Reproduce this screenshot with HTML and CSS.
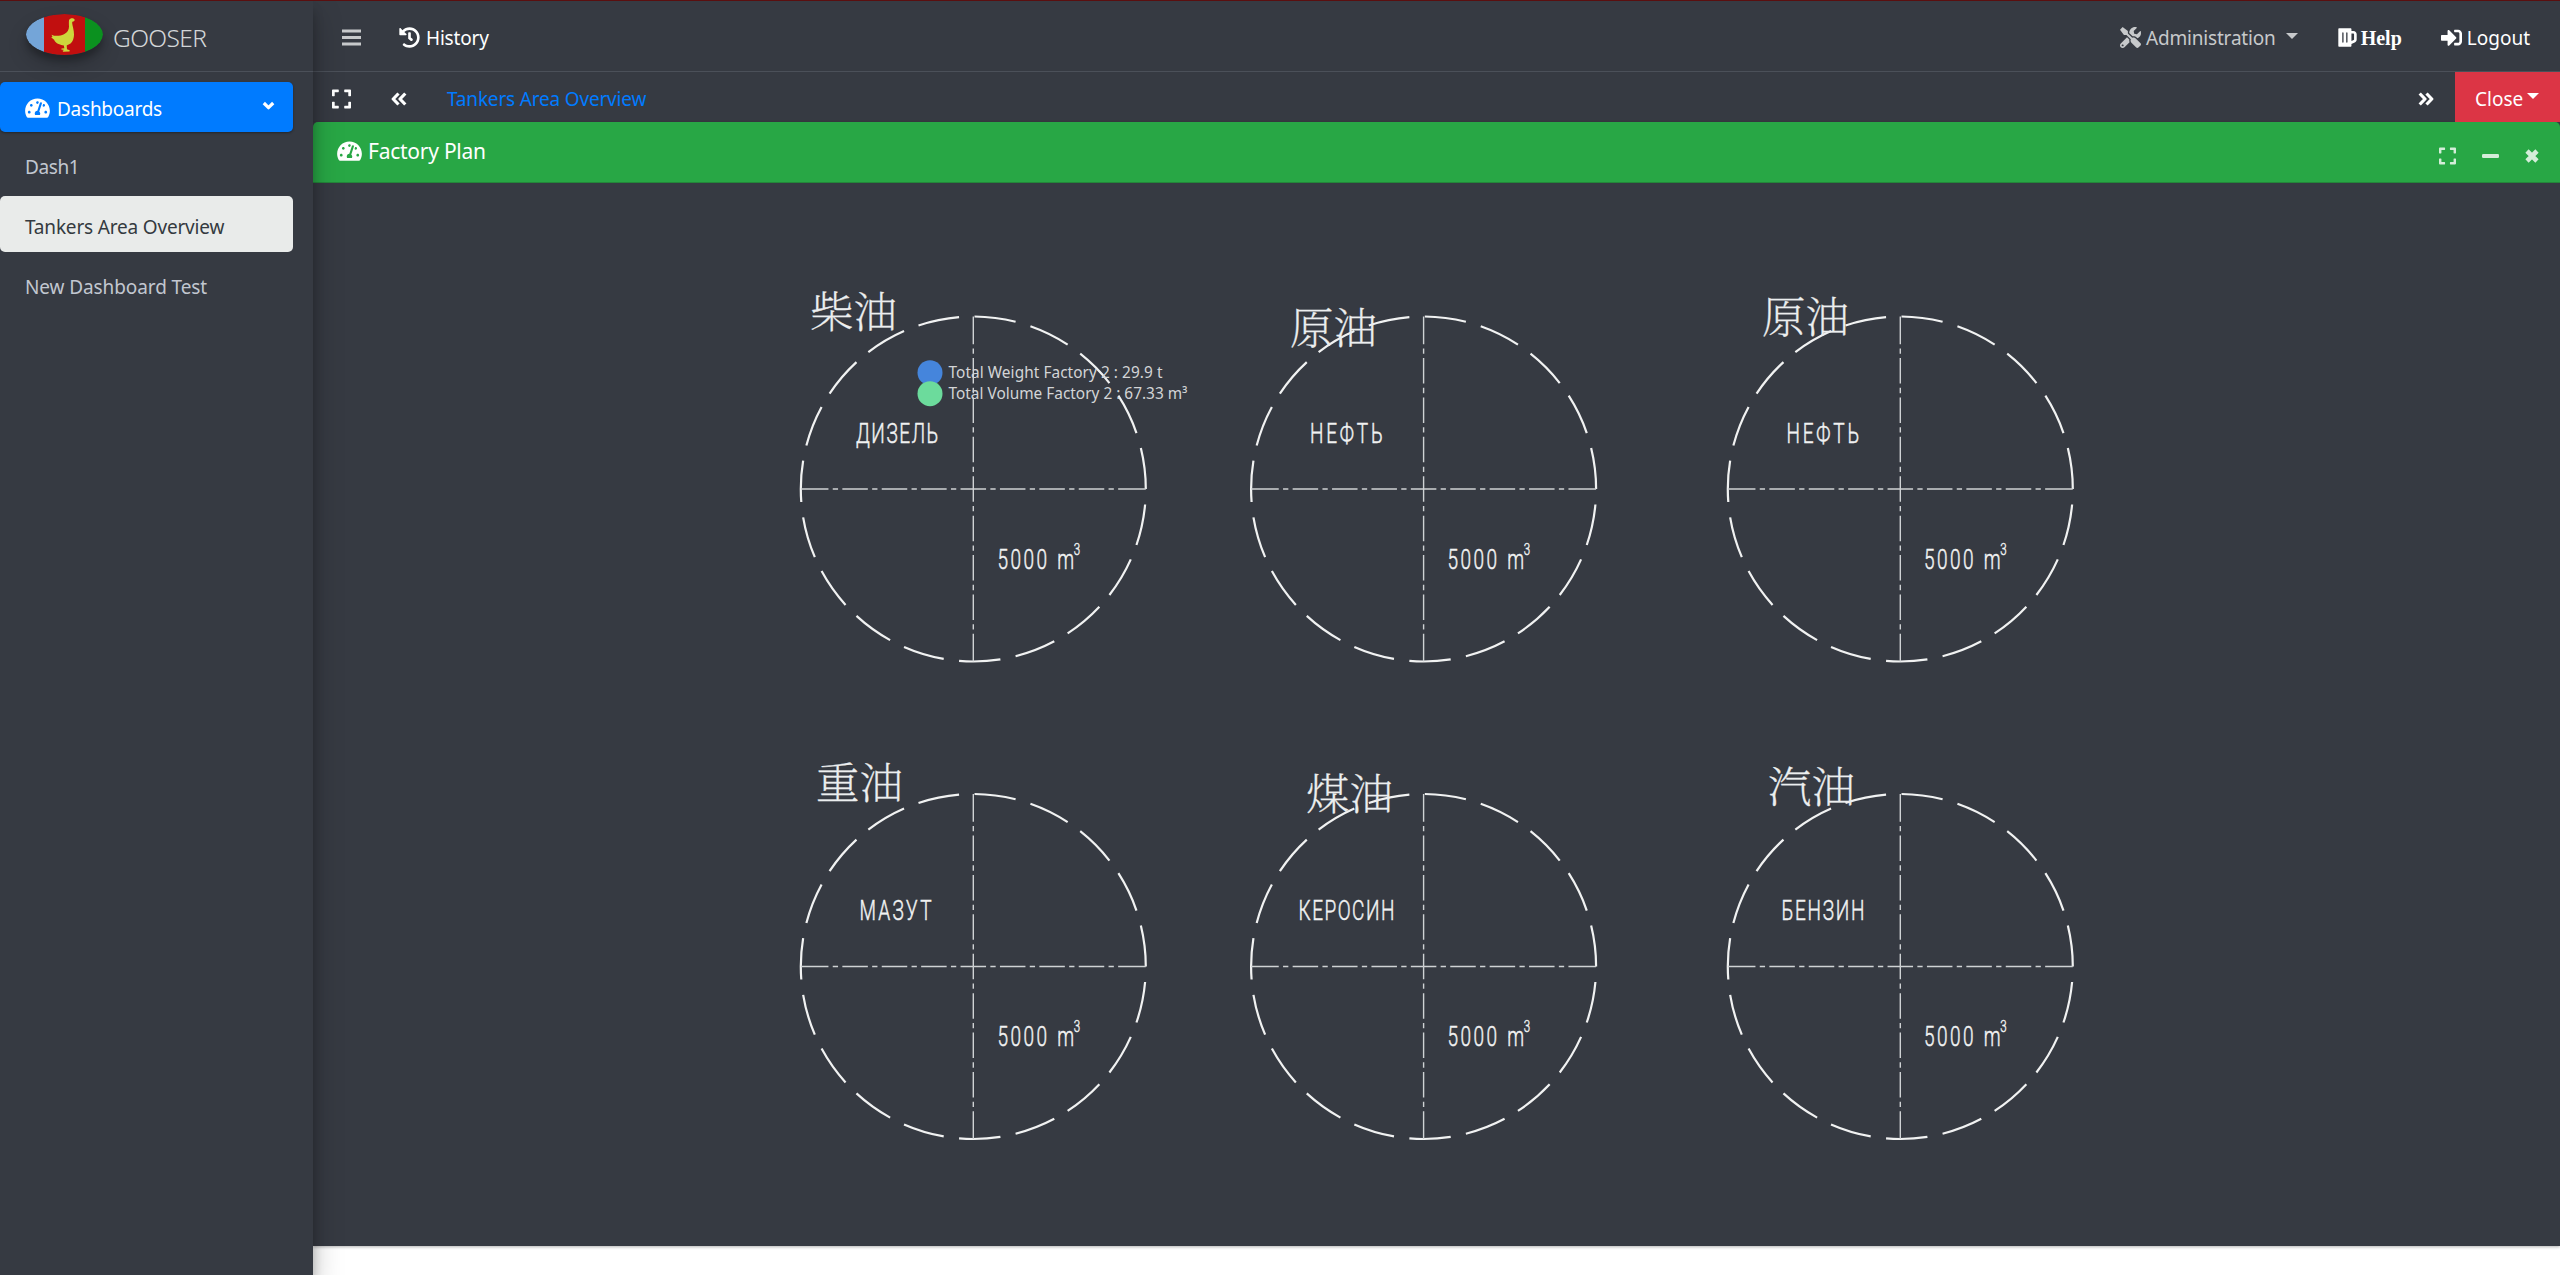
FILE: index.html
```
<!DOCTYPE html>
<html lang="en">
<head>
<meta charset="utf-8">
<title>Tankers Area Overview</title>
<link rel="stylesheet" href="styles.css">
</head>
<body>
<svg class="defs" aria-hidden="true">
  <symbol id="i-dash" viewBox="0 0 576 512"><path d="M288 32C128.94 32 0 160.94 0 320c0 52.8 14.25 102.26 39.06 144.8 5.61 9.62 16.3 15.2 27.44 15.2h443c11.14 0 21.83-5.58 27.44-15.2C561.75 422.26 576 372.8 576 320c0-159.06-128.94-288-288-288zm0 64c14.71 0 26.58 10.13 30.32 23.65-1.11 2.26-2.64 4.23-3.45 6.67l-9.22 27.67c-5.13 3.49-10.97 6.01-17.64 6.01-17.67 0-32-14.33-32-32S270.33 96 288 96zM96 384c-17.67 0-32-14.33-32-32s14.33-32 32-32 32 14.33 32 32-14.33 32-32 32zm48-160c-17.67 0-32-14.33-32-32s14.33-32 32-32 32 14.33 32 32-14.33 32-32 32zm246.77-72.41l-61.33 184C343.13 347.33 352 364.54 352 384c0 11.72-3.38 22.55-8.88 32H232.88c-5.5-9.45-8.88-20.28-8.88-32 0-33.94 26.5-61.43 59.9-63.59l61.34-184.01c4.17-12.56 17.73-19.45 30.36-15.17 12.57 4.19 19.35 17.79 15.17 30.36zm14.66 57.2l15.52-46.55c3.47-1.29 7.13-2.23 11.05-2.23 17.67 0 32 14.33 32 32s-14.33 32-32 32c-11.38-.01-20.89-6.28-26.57-15.22zM480 384c-17.67 0-32-14.33-32-32s14.33-32 32-32 32 14.33 32 32-14.33 32-32 32z"/></symbol>
  <symbol id="i-history" viewBox="0 0 512 512"><path d="M504 255.531c.253 136.64-111.18 248.372-247.82 248.468-59.015.042-113.223-20.53-155.822-54.911-11.077-8.94-11.905-25.541-1.839-35.607l11.267-11.267c8.609-8.609 22.353-9.551 31.891-1.984C173.062 425.135 212.781 440 256 440c101.705 0 184-82.311 184-184 0-101.705-82.311-184-184-184-48.814 0-93.149 18.969-126.068 49.932l50.754 50.754c10.08 10.08 2.941 27.314-11.313 27.314H24c-8.837 0-16-7.163-16-16V38.627c0-14.254 17.234-21.393 27.314-11.314l49.372 49.372C129.209 34.136 189.552 8 256 8c136.81 0 247.747 110.78 248 247.531zm-180.912 78.784l9.823-12.63c8.138-10.463 6.253-25.542-4.21-33.679L288 256.349V152c0-13.255-10.745-24-24-24h-16c-13.255 0-24 10.745-24 24v135.651l65.409 50.874c10.463 8.137 25.541 6.253 33.679-4.21z"/></symbol>
  <symbol id="i-expand" viewBox="0 0 448 512"><path d="M0 180V56c0-13.3 10.7-24 24-24h124c6.6 0 12 5.4 12 12v40c0 6.6-5.4 12-12 12H64v84c0 6.6-5.4 12-12 12H12c-6.6 0-12-5.4-12-12zM288 44v40c0 6.6 5.4 12 12 12h84v84c0 6.6 5.4 12 12 12h40c6.6 0 12-5.4 12-12V56c0-13.3-10.7-24-24-24H300c-6.6 0-12 5.4-12 12zm148 276h-40c-6.6 0-12 5.4-12 12v84h-84c-6.6 0-12 5.4-12 12v40c0 6.6 5.4 12 12 12h124c13.3 0 24-10.7 24-24V332c0-6.6-5.4-12-12-12zM160 468v-40c0-6.6-5.4-12-12-12H64v-84c0-6.6-5.4-12-12-12H12c-6.6 0-12 5.4-12 12v124c0 13.3 10.7 24 24 24h124c6.6 0 12-5.4 12-12z"/></symbol>
  <symbol id="i-signin" viewBox="0 0 512 512"><path d="M416 448h-84c-6.6 0-12-5.4-12-12v-40c0-6.6 5.4-12 12-12h84c17.7 0 32-14.3 32-32V160c0-17.7-14.3-32-32-32h-84c-6.6 0-12-5.4-12-12V76c0-6.6 5.4-12 12-12h84c53 0 96 43 96 96v192c0 53-43 96-96 96zm-47-201L201 79c-15-15-41-4.5-41 17v96H24c-13.3 0-24 10.7-24 24v96c0 13.3 10.7 24 24 24h136v96c0 21.5 26 32 41 17l168-168c9.3-9.4 9.3-24.6 0-34z"/></symbol>
  <symbol id="i-beer" viewBox="0 0 448 512"><path d="M368 96h-48V56c0-13.255-10.745-24-24-24H24C10.745 32 0 42.745 0 56v400c0 13.255 10.745 24 24 24h272c13.255 0 24-10.745 24-24v-42.11l80.606-35.977C429.396 365.063 448 336.388 448 304.86V176c0-44.112-35.888-80-80-80zm16 208.86a16.018 16.018 0 0 1-9.479 14.611L320 343.805V160h48c8.822 0 16 7.178 16 16v128.86zM208 384c-8.836 0-16-7.164-16-16V144c0-8.836 7.164-16 16-16s16 7.164 16 16v224c0 8.836-7.164 16-16 16zm-96 0c-8.836 0-16-7.164-16-16V144c0-8.836 7.164-16 16-16s16 7.164 16 16v224c0 8.836-7.164 16-16 16z"/></symbol>
  <symbol id="i-tools" viewBox="0 0 512 512"><path d="M501.1 395.7L384 278.6c-23.1-23.1-57.6-27.6-85.4-13.9L192 158.1V96L64 0 0 64l96 128h62.1l106.6 106.6c-13.6 27.8-9.2 62.3 13.9 85.4l117.1 117.1c14.6 14.6 38.2 14.6 52.7 0l52.7-52.7c14.5-14.6 14.5-38.2 0-52.7zM331.7 225c28.3 0 54.9 11 74.9 31l19.4 19.4c15.8-6.9 30.8-16.5 43.8-29.5 37.1-37.1 49.7-89.3 37.9-136.7-2.2-9-13.5-12.1-20.1-5.5l-74.4 74.4-67.9-11.3L334 98.9l74.4-74.4c6.6-6.6 3.4-17.9-5.7-20.2-47.4-11.7-99.6.9-136.6 37.9-28.5 28.5-41.9 66.1-41.2 103.6l82.1 82.1c8.1-1.9 16.5-2.9 24.7-2.9zm-103.9 82l-56.7-56.7L18.7 402.8c-25 25-25 65.5 0 90.5s65.5 25 90.5 0l123.6-123.6c-7.6-19.9-9.9-41.6-5-62.7zM64 472c-13.2 0-24-10.8-24-24 0-13.3 10.7-24 24-24s24 10.7 24 24c0 13.2-10.7 24-24 24z"/></symbol>
  <symbol id="i-bars" viewBox="0 0 19 17"><path d="M0 .5h19v3H0zM0 7h19v3H0zM0 13.500h19v3H0z"/></symbol>
  <symbol id="i-dleft" viewBox="0 0 16 14"><path class="line" d="M7.500 1.500 2.200 7l5.300 5.500M14.300 1.500 9 7l5.300 5.500"/></symbol>
  <symbol id="i-dright" viewBox="0 0 16 14"><path class="line" d="M1.700 1.500 7 7l-5.300 5.500M8.500 1.500 13.800 7l-5.300 5.500"/></symbol>
  <symbol id="i-down" viewBox="0 0 13 9"><path class="line" d="M1.800 2l4.700 4.700L11.200 2"/></symbol>
  <symbol id="i-minus" viewBox="0 0 17 4"><rect width="17" height="4" rx="1.300"/></symbol>
  <symbol id="i-times" viewBox="0 0 14 14"><path class="line thick" d="M2 2l10 10M12 2L2 12"/></symbol>
</svg>

<aside class="sidebar">
  <a class="brand">
    <svg class="logo" viewBox="0 0 77 41"><defs><clipPath id="oval"><ellipse cx="38.500" cy="20.500" rx="38.500" ry="20.500"/></clipPath></defs>
      <g clip-path="url(#oval)"><path fill="#74a5d8" d="M0 0h18v41H0z"/><path fill="#c10f0f" d="M18 0h41v41H18z"/><path fill="#0b911f" d="M59 0h18v41H59z"/></g>
      <path fill="#cdd63c" d="M43 6.200C44 4 48 3.600 48.800 6l-.8 1.300c-1.500.1-2 .8-1.800 2 .2 2.700 1.900 7 1.800 11.200-.1 4.500-1.600 9-6.500 10.600l-.8.4.3 3.800 2.700.9-.2 1.200-6.500.4-.3-1.200 1.800-.6-3.200-.4.200-1.200 2.800-.1-.4-2.900c-4.300-.4-8.500-2-9.800-5.600l-3-2.500 1.400-.3-1-2.300c4 1.900 8.500 1.300 12.500-.5 3.500-1.600 5-4.300 5-7.600-.1-2.500-.2-4.400 0-6.400z"/></svg>
    <span class="brand-text">GOOSER</span>
  </a>
  <nav class="menu">
    <a class="item head"><svg class="ic dash"><use href="#i-dash"/></svg><span>Dashboards</span><svg class="ic chev"><use href="#i-down"/></svg></a>
    <a class="item d1">Dash1</a>
    <a class="item current">Tankers Area Overview</a>
    <a class="item ndt">New Dashboard Test</a>
  </nav>
</aside>

<main class="main">
  <header class="navbar">
    <svg class="ic bars"><use href="#i-bars"/></svg>
    <a class="link history"><svg class="ic s21"><use href="#i-history"/></svg><span>History</span></a>
    <a class="link admin"><svg class="ic s21"><use href="#i-tools"/></svg><span>Administration</span><i class="caret"></i></a>
    <a class="link help"><svg class="ic beer"><use href="#i-beer"/></svg><span>Help</span></a>
    <a class="link logout"><svg class="ic s21"><use href="#i-signin"/></svg><span>Logout</span></a>
  </header>
  <div class="tabs">
    <svg class="ic exp"><use href="#i-expand"/></svg>
    <svg class="ic dbl"><use href="#i-dleft"/></svg>
    <a class="tab">Tankers Area Overview</a>
    <svg class="ic dbl right"><use href="#i-dright"/></svg>
    <a class="close"><span>Close</span><i class="caret"></i></a>
  </div>
  <section class="card">
    <div class="card-head">
      <svg class="ic dash"><use href="#i-dash"/></svg><h3>Factory Plan</h3>
      <div class="tools">
        <svg class="ic t-exp"><use href="#i-expand"/></svg><svg class="ic t-min"><use href="#i-minus"/></svg><svg class="ic t-x"><use href="#i-times"/></svg>
      </div>
    </div>
    <svg class="plan" viewBox="313 183 2247 1063">
      <defs>
        <g id="tank">
          <path class="rim" pathLength="360" d="M172.500 0A172.500 172.500 0 1 0-172.500 0A172.500 172.500 0 1 0 172.500 0"/>
          <path class="axis" d="M0 0H172.500"/><path class="axis" d="M0 0H-172.500"/>
          <path class="axis" d="M0 0V172.500"/><path class="axis" d="M0 0V-172.500"/>
        </g>
      </defs>
      <use href="#tank" x="973.300" y="489"/><use href="#tank" x="1423.600" y="489"/><use href="#tank" x="1900.300" y="489"/>
      <use href="#tank" x="973.300" y="966.500"/><use href="#tank" x="1423.600" y="966.500"/><use href="#tank" x="1900.300" y="966.500"/>
      <g class="han">
        <text x="810" y="328">柴油</text><text x="1290" y="344">原油</text><text x="1762" y="333">原油</text>
        <text x="816" y="799">重油</text><text x="1306" y="810">煤油</text><text x="1768" y="803">汽油</text>
      </g>
      <g transform="translate(997.500 568.500) scale(.68 1)"><text class="cad" textLength="73">5000</text><text class="cad" x="88">m</text><text class="cad sup" x="112" y="-14">3</text></g>
      <g transform="translate(1447.500 568.500) scale(.68 1)"><text class="cad" textLength="73">5000</text><text class="cad" x="88">m</text><text class="cad sup" x="112" y="-14">3</text></g>
      <g transform="translate(1924 568.500) scale(.68 1)"><text class="cad" textLength="73">5000</text><text class="cad" x="88">m</text><text class="cad sup" x="112" y="-14">3</text></g>
      <g transform="translate(997.500 1046) scale(.68 1)"><text class="cad" textLength="73">5000</text><text class="cad" x="88">m</text><text class="cad sup" x="112" y="-14">3</text></g>
      <g transform="translate(1447.500 1046) scale(.68 1)"><text class="cad" textLength="73">5000</text><text class="cad" x="88">m</text><text class="cad sup" x="112" y="-14">3</text></g>
      <g transform="translate(1924 1046) scale(.68 1)"><text class="cad" textLength="73">5000</text><text class="cad" x="88">m</text><text class="cad sup" x="112" y="-14">3</text></g>
      <g transform="translate(856 442.500) scale(.68 1)"><text class="cad" textLength="121">ДИЗЕЛЬ</text></g>
      <g transform="translate(1310 442.500) scale(.68 1)"><text class="cad" textLength="107">НЕФТЬ</text></g>
      <g transform="translate(1786.500 442.500) scale(.68 1)"><text class="cad" textLength="107">НЕФТЬ</text></g>
      <g transform="translate(859.500 920) scale(.68 1)"><text class="cad" textLength="106">МАЗУТ</text></g>
      <g transform="translate(1298.500 920) scale(.68 1)"><text class="cad" textLength="141">КЕРОСИН</text></g>
      <g transform="translate(1781.500 920) scale(.68 1)"><text class="cad" textLength="122">БЕНЗИН</text></g>
      <circle class="dot blue" cx="930" cy="372.700" r="12.500"/><circle class="dot green" cx="930" cy="393.700" r="12.500"/>
      <text class="legend" x="948.500" y="377.700" textLength="214">Total Weight Factory 2 : 29.9 t</text>
      <text class="legend" x="948.500" y="398.700" textLength="239">Total Volume Factory 2 : 67.33 m³</text>
    </svg>
  </section>
</main>
</body>
</html>
```
FILE: styles.css
```
* { box-sizing: border-box; }
body {
  margin: 0;
  height: 1275px;
  display: flex;
  overflow: hidden;
  background: #fff;
  border-top: 1px solid #5a0f0f;
  font: 19px/30px "Noto Sans", "Open Sans", sans-serif;
  letter-spacing: -.18px;
  color: #fff;
}
.defs { position: absolute; width: 0; height: 0; }
.ic { fill: currentColor; flex: none; display: block; }
.line { fill: none; stroke: currentColor; stroke-width: 3.2; stroke-linejoin: round; }
.thick { stroke-width: 4.6; }

.sidebar {
  width: 313px;
  flex: none;
  background: #363a42;
  position: relative;
  z-index: 1;
  box-shadow: 0 14px 28px rgba(0,0,0,.25), 0 10px 10px rgba(0,0,0,.22);
}
.brand {
  height: 71px;
  border-bottom: 1px solid #4b5059;
  display: flex;
  align-items: flex-start;
  padding: 13px 0 0 26px;
}
.logo {
  width: 77px;
  height: 41px;
  border-radius: 50%;
  box-shadow: 0 10px 20px rgba(0,0,0,.19), 0 6px 6px rgba(0,0,0,.23);
}
.brand-text {
  margin: 7px 0 0 10px;
  font-size: 24.500px;
  font-weight: 300;
  line-height: 34px;
  letter-spacing: -.6px;
  color: #d3d6d8;
}
.menu { display: flex; flex-direction: column; padding-top: 10px; width: 293px; }
.item { display: flex; padding-left: 25px; border-radius: 5px; color: #c2c7d0; }
.head {
  height: 50px;
  padding-top: 12px;
  background: #007bff;
  color: #fff;
  box-shadow: 0 1px 3px rgba(0,0,0,.12), 0 1px 2px rgba(0,0,0,.24);
}
.head span { margin-left: 7px; letter-spacing: -.25px; }
.dash { width: 25px; height: 22px; }
.head .dash { margin-top: 3px; }
.chev { width: 13px; height: 9px; margin: 7px 18px 0 auto; }
.d1 { height: 64px; padding-top: 20px; letter-spacing: -.4px; }
.current { height: 56px; padding-top: 16px; background: #e9ebea; color: #343a40; }
.ndt { padding-top: 20px; letter-spacing: -.1px; }

.main { flex: 1; min-width: 0; }
.navbar {
  height: 71px;
  background: #363a42;
  border-bottom: 1px solid #4b5059;
  display: flex;
  align-items: center;
  padding: 3px 30px 0 29px;
}
.bars { width: 19px; height: 17px; color: #c7c9cb; }
.link { display: flex; align-items: center; }
.s21 { width: 21px; height: 21px; }
.history { margin-left: 38px; }
.history span { margin-left: 6px; }
.admin { margin-left: auto; color: #c7c9cb; }
.admin span { margin-left: 5px; }
.caret { border: 6px solid transparent; border-top-color: currentColor; border-bottom: 0; }
.admin .caret { margin: -4px 0 0 10px; }
.help { margin-left: 40px; font: bold 20px/30px "Liberation Serif", serif; letter-spacing: 0; }
.beer { width: 19px; height: 21px; }
.help span { margin-left: 4px; }
.logout { margin-left: 39px; }
.logout span { margin-left: 5px; letter-spacing: 0; }
.tabs { height: 50px; background: #363a42; display: flex; align-items: center; padding-left: 19px; }
.exp { width: 19px; height: 22px; margin-top: 3px; }
.dbl { width: 16px; height: 14px; margin: 4px 0 0 40px; }
.tab { margin: 3px 0 0 40px; color: #007bff; }
.right { margin-left: auto; }
.close {
  width: 105px;
  height: 50px;
  margin-left: 21px;
  padding: 3px 0 0 20px;
  display: flex;
  align-items: center;
  background: #dc3545;
  letter-spacing: 0;
}
.close .caret { margin: -5px 0 0 4px; }

.card { background: #363a42; height: 1124px; box-shadow: 0 1px 3px rgba(0,0,0,.3); }
.card-head {
  height: 61px;
  display: flex;
  align-items: center;
  padding: 0 21px 0 24px;
  background: #28a745;
  border-bottom: 1px solid #24863a;
  border-radius: 5px 5px 0 0;
}
.card-head .dash { margin-top: -3px; }
h3 { margin: -3px 0 0 6px; font-size: 21px; font-weight: 400; line-height: 30px; letter-spacing: -.25px; }
.tools { margin: 8px 0 0 auto; display: flex; align-items: center; opacity: .8; }
.t-exp { width: 17px; height: 20px; }
.t-min { width: 17px; height: 4px; margin-left: 26px; }
.t-x { width: 14px; height: 14px; margin-left: 26px; }

.plan { display: block; width: 2247px; height: 1063px; }
.rim { fill: none; stroke: #f1f2f2; stroke-width: 2.2; stroke-dasharray: 13.8 5.147; }
.axis { fill: none; stroke: #cfd2d4; stroke-width: 1.4; stroke-dasharray: 12.75 4.3 5.3 4.3 25.5 4.3 5.3 4.3 25.5 4.3 5.3 4.3 25.5 4.3 5.3 4.3 40; }
.plan text { letter-spacing: 0; }
.cad { font: 300 28px Roboto, sans-serif; fill: #f1f2f2; stroke: #f1f2f2; stroke-width: .5; }
.sup { font-size: 17px; }
.han text { font: 200 43.500px "Noto Serif CJK SC", "Noto Sans CJK SC", serif; fill: #eceeef; stroke: #eceeef; stroke-width: .3; }
.plan .legend { font: 15.400px "Noto Sans", sans-serif; fill: #d3d5d7; }
.blue { fill: #4585dc; }
.green { fill: #6cdb9c; }
```
